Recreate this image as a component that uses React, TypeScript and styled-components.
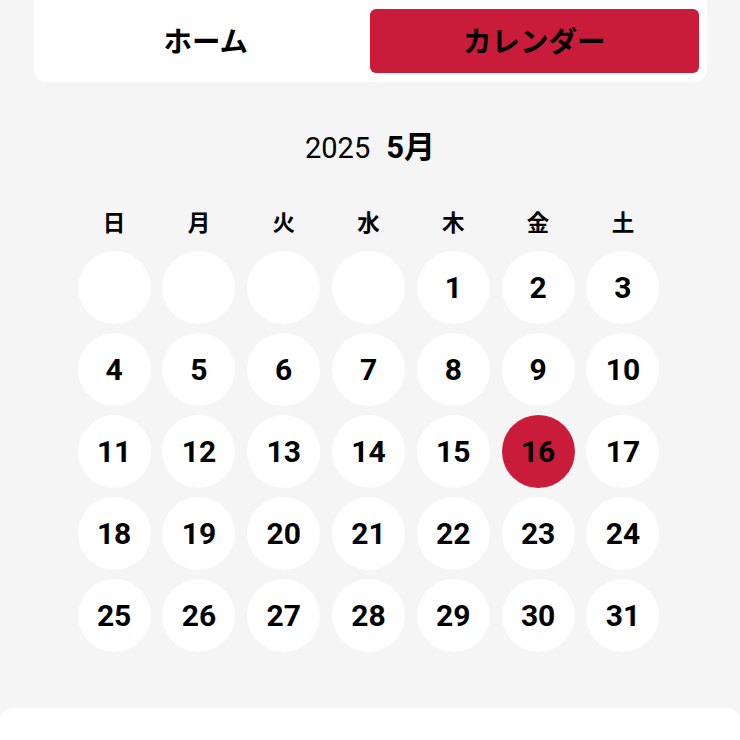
import React from 'react'
import styled, { createGlobalStyle } from 'styled-components'

const GlobalStyle = createGlobalStyle`
    html, body {
        margin: 0;
        padding: 0;
        background: #f5f5f5;
        font-family: Roboto, "Noto Sans CJK JP", sans-serif;
        color: #000;
    }
`

const red = '#c91c3b'

const Page = styled.div`
    display: flex;
    flex-direction: column;
    align-items: center;
    min-height: 740px;
    position: relative;
    overflow: hidden;
`

const TabBar = styled.div`
    display: flex;
    width: 673px;
    height: 82px;
    box-sizing: border-box;
    padding: 9px 8px;
    background: #fff;
    border-radius: 0 0 12px 12px;
`

const Tab = styled.button<{ active?: boolean }>`
    flex: 1;
    border: none;
    border-radius: 6px;
    padding: 0 0 4px;
    background: ${props => props.active ? red : 'transparent'};
    color: #000;
    font-family: "Noto Sans CJK JP", sans-serif;
    font-size: 28.5px;
    font-weight: 700;
    cursor: pointer;
`

const MonthHeader = styled.div`
    display: flex;
    align-items: baseline;
    gap: 16px;
    margin-top: 46px;
    height: 40px;
    line-height: 40px;
`

const Year = styled.span`
    font-family: Roboto, sans-serif;
    font-size: 29px;
    font-weight: 400;
`

const Month = styled.span`
    font-family: Roboto, "Noto Sans CJK JP", sans-serif;
    font-size: 31px;
    font-weight: 700;
`

const Grid = styled.div`
    display: grid;
    grid-template-columns: repeat(7, 73px);
    column-gap: 11.8px;
    row-gap: 9px;
    justify-content: center;
    margin-top: 38px;
    margin-left: -3px;
`

const Weekday = styled.div`
    height: 30px;
    line-height: 30px;
    margin-bottom: 6px;
    text-align: center;
    font-family: "Noto Sans CJK JP", sans-serif;
    font-size: 22.5px;
    font-weight: 600;
`

const Day = styled.div<{ selected?: boolean }>`
    width: 73px;
    height: 73px;
    border-radius: 50%;
    display: flex;
    align-items: center;
    justify-content: center;
    background: ${props => props.selected ? red : '#fff'};
    font-family: Roboto, sans-serif;
    font-size: 30px;
    font-weight: 700;
`

const Sheet = styled.div`
    position: absolute;
    left: 0;
    right: 0;
    top: 708px;
    height: 60px;
    background: #fff;
    border-radius: 12px 12px 0 0;
`

const weekdays = ['日', '月', '火', '水', '木', '金', '土']

export default function App() {
    const [tab, setTab] = React.useState<'home' | 'calendar'>('calendar')
    const offset = 4
    const days = 31
    const cells: (number | null)[] = []
    for (let i = 0; i < offset; i++) cells.push(null)
    for (let d = 1; d <= days; d++) cells.push(d)

    return (
        <>
            <GlobalStyle />
            <Page>
                <TabBar>
                    <Tab active={tab === 'home'} onClick={() => setTab('home')}>ホーム</Tab>
                    <Tab active={tab === 'calendar'} onClick={() => setTab('calendar')}>カレンダー</Tab>
                </TabBar>
                <MonthHeader>
                    <Year>2025</Year>
                    <Month>5月</Month>
                </MonthHeader>
                <Grid>
                    {weekdays.map(w => <Weekday key={w}>{w}</Weekday>)}
                    {cells.map((d, i) => (
                        <Day key={i} selected={d === 16}>{d}</Day>
                    ))}
                </Grid>
                <Sheet />
            </Page>
        </>
    )
}
